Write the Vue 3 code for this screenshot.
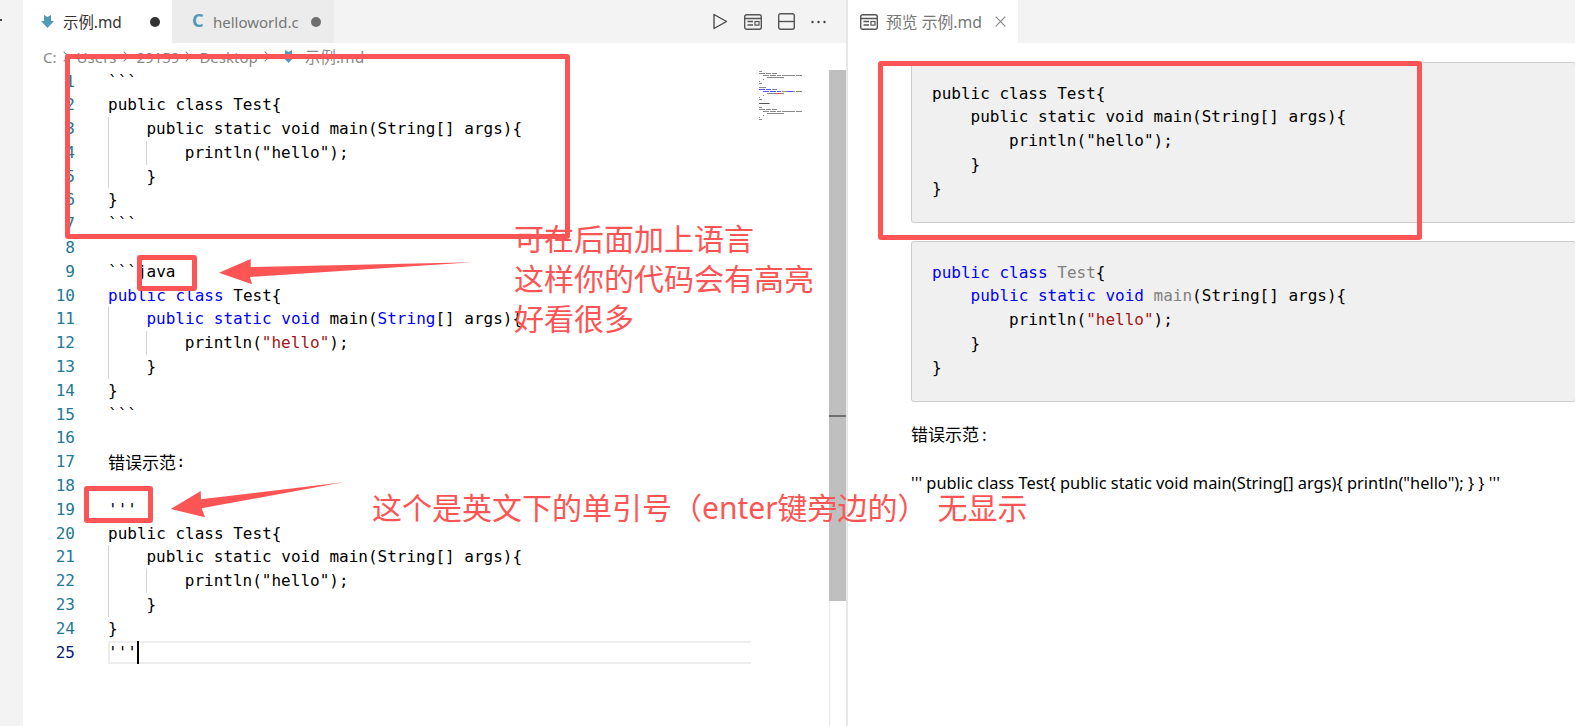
<script setup>
const t = (s, c = '') => ({ s, c })
const K = 'kw', S = 'str'
const plain = [
  { g: 0, x: [t('```')] },
  { g: 0, x: [t('public class Test{')] },
  { g: 1, x: [t('public static void main(String[] args){')] },
  { g: 2, x: [t('println("hello");')] },
  { g: 1, x: [t('}')] },
  { g: 0, x: [t('}')] },
]
const java = [
  { g: 0, x: [t('public', K), t(' '), t('class', K), t(' Test{')] },
  { g: 1, x: [t('public', K), t(' '), t('static', K), t(' '), t('void', K), t(' main('), t('String', K), t('[] args){')] },
  { g: 2, x: [t('println('), t('"hello"', S), t(');')] },
  { g: 1, x: [t('}')] },
  { g: 0, x: [t('}')] },
]
const lines = [
  ...plain,
  { g: 0, x: [t('```')] },
  { g: 0, x: [] },
  { g: 0, x: [t('```java')] },
  ...java,
  { g: 0, x: [t('```')] },
  { g: 0, x: [] },
  { g: 0, cjk: true, x: [t('错误示范', 'cjk'), t(':')] },
  { g: 0, x: [] },
  { g: 0, x: [t("'''")] },
  ...plain.slice(1),
  { g: 0, active: true, x: [t("'''")] },
]
const mini = []
lines.forEach((l, i) => {
  let at = l.g * 4
  l.x.forEach((tok) => {
    if (tok.c === 'cjk') {
      mini.push({ k: `${i}-${at}`, x: at, y: i * 2 + 1, w: 10, f: '#555' })
      at += 10
      return
    }
    tok.s.split(/( )/).forEach((word) => {
      if (word.trim()) {
        mini.push({ k: `${i}-${at}`, x: at, y: i * 2 + 1, w: word.length, f: tok.c === K ? '#5555ff' : tok.c === S ? '#d86060' : '#8a8a8a' })
      }
      at += word.length
    })
  })
})
const preview = [
  [t('public class Test{')],
  [t('    public static void main(String[] args){')],
  [t('        println("hello");')],
  [t('    }')],
  [t('}')],
]
const previewHl = [
  [t('public', K), t(' '), t('class', K), t(' '), t('Test', 'name'), t('{')],
  [t('    '), t('public', K), t(' '), t('static', K), t(' '), t('void', K), t(' '), t('main', 'name'), t('(String[] args){')],
  [t('        println('), t('"hello"', S), t(');')],
  [t('    }')],
  [t('}')],
]
const crumbs = ['C:', 'Users', '29159', 'Desktop']
</script>

<template>
  <div class="app">
    <aside class="activity"><i class="activity-dot"></i></aside>

    <section class="group">
      <header class="tabbar">
        <div class="tab tab-active">
          <svg class="md" viewBox="0 0 13 13"><path d="M3 0 6.5 2 10 0V6H13L6.5 13 0 6H3Z" fill="#519aba" /></svg>
          <span class="tab-name dark">示例.md</span>
          <i class="dot dark-dot"></i>
        </div>
        <div class="tab tab-idle">
          <b class="c-icon">C</b>
          <span class="tab-name">helloworld.c</span>
          <i class="dot"></i>
        </div>
        <div class="actions">
          <svg width="16" height="17" viewBox="0 0 16 17"><path d="M2 1.5 14.5 8.5 2 15.5Z" fill="none" stroke="#424242" stroke-width="1.3" stroke-linejoin="round" /></svg>
          <svg width="18" height="16" viewBox="0 0 18 16"><rect x=".7" y=".7" width="16.6" height="14.6" rx="2" fill="none" stroke="#555" stroke-width="1.4" /><path d="M1 4.5H17M3.5 7.5H9M3.5 11H9" stroke="#555" stroke-width="1.3" fill="none" /><rect x="11" y="7.5" width="4" height="3.6" fill="none" stroke="#555" stroke-width="1.2" /></svg>
          <svg width="17" height="17" viewBox="0 0 17 17"><rect x=".7" y=".7" width="15.6" height="15.6" rx="2" fill="none" stroke="#555" stroke-width="1.4" /><path d="M1 8.5H16" stroke="#555" stroke-width="1.4" /></svg>
          <svg width="15" height="4" viewBox="0 0 15 4"><circle cx="1.5" cy="2" r="1.2" fill="#424242" /><circle cx="7.5" cy="2" r="1.2" fill="#424242" /><circle cx="13.5" cy="2" r="1.2" fill="#424242" /></svg>
        </div>
      </header>

      <nav class="crumbs">
        <template v-for="c in crumbs" :key="c">
          <span>{{ c }}</span>
          <svg class="chev" width="6" height="11" viewBox="0 0 6 11"><path d="M.7.7 5.3 5.5.7 10.3" fill="none" stroke="#888" stroke-width="1.1" /></svg>
        </template>
        <svg class="md md-small" viewBox="0 0 13 13"><path d="M3 0 6.5 2 10 0V6H13L6.5 13 0 6H3Z" fill="#519aba" /></svg>
        <span class="crumb-file">示例.md</span>
      </nav>

      <div class="editor">
        <div class="gutter">
          <div v-for="(l, i) in lines" :key="i" class="num" :class="{ 'num-active': l.active }">{{ i + 1 }}</div>
        </div>
        <div class="code">
          <div v-for="(l, i) in lines" :key="i" class="line" :class="{ 'line-active': l.active }">
            <span v-for="n in l.g" :key="n" class="guide"></span>
            <span v-for="(tok, j) in l.x" :key="j" :class="tok.c">{{ tok.s }}</span>
            <i v-if="l.active" class="cursor"></i>
          </div>
        </div>
        <svg class="minimap" width="48" height="54" viewBox="0 0 48 54">
          <rect v-for="m in mini" :key="m.k" :x="m.x" :y="m.y" :width="m.w" height="1" :fill="m.f" />
        </svg>
        <div class="scroll">
          <div class="thumb"><i class="ruler"></i></div>
        </div>
      </div>
    </section>

    <div class="divider"></div>

    <section class="preview">
      <header class="tabbar">
        <div class="tab tab-preview">
          <svg width="18" height="16" viewBox="0 0 18 16"><rect x=".7" y=".7" width="16.6" height="14.6" rx="2" fill="none" stroke="#555" stroke-width="1.4" /><path d="M1 4.5H17M3.5 7.5H9M3.5 11H9" stroke="#555" stroke-width="1.3" fill="none" /><rect x="11" y="7.5" width="4" height="3.6" fill="none" stroke="#555" stroke-width="1.2" /></svg>
          <span class="tab-name">预览 示例.md</span>
          <svg class="close" width="11" height="11" viewBox="0 0 11 11"><path d="M.7.7 10.3 10.3M10.3.7.7 10.3" stroke="#8a8a8a" stroke-width="1.2" /></svg>
        </div>
      </header>
      <div class="doc">
        <pre class="block"><template v-for="(row, i) in preview" :key="i"><span v-for="(tok, j) in row" :key="j">{{ tok.s }}</span>{{ '\n' }}</template></pre>
        <pre class="block"><template v-for="(row, i) in previewHl" :key="i"><span v-for="(tok, j) in row" :key="j" :class="tok.c">{{ tok.s }}</span>{{ '\n' }}</template></pre>
        <p class="para para-cjk">错误示范<span class="colon">:</span></p>
        <p class="para">''' public class Test{ public static void main(String[] args){ println("hello"); } } '''</p>
      </div>
    </section>

    <i class="mark mark-a"></i>
    <i class="mark mark-b"></i>
    <i class="mark mark-c"></i>
    <i class="mark mark-d"></i>
    <svg class="arrows" width="1575" height="726" viewBox="0 0 1575 726">
      <path d="M472.7 262.3 250.7 267 250.7 259 219 272.7 252 284.3 250 277Z" fill="#fd5555" />
      <path d="M343.3 482.3 201 499.3 200.7 491 170.7 509 205 517.3 201.7 508.3Z" fill="#fd5555" />
    </svg>
    <div class="note note-a">可在后面加上语言<br />这样你的代码会有高亮<br />好看很多</div>
    <div class="note note-b">这个是英文下的单引号（enter键旁边的） 无显示</div>
  </div>
</template>

<style>
html, body { margin: 0; background: #fff; overflow: hidden; }
</style>

<style scoped>
.app {
  position: relative;
  display: flex;
  width: 1575px;
  height: 726px;
  overflow: hidden;
  background: #fff;
  font-family: "Noto Sans", "Noto Sans CJK SC", sans-serif;
}
.activity { position: relative; width: 23px; flex: none; background: #f3f3f3; }
.activity-dot { position: absolute; left: 0; top: 19px; width: 2px; height: 2px; background: #444; }
.group { width: 823px; flex: none; display: flex; flex-direction: column; }
.tabbar { height: 43px; flex: none; display: flex; align-items: stretch; background: #f3f3f3; }
.tab { display: flex; align-items: center; }
.tab-active { width: 149px; background: #fff; padding-left: 18px; box-sizing: border-box; }
.tab-idle { width: 162px; background: #ececec; padding-left: 20px; box-sizing: border-box; }
.tab-preview { width: 170px; background: #fff; padding-left: 12px; box-sizing: border-box; }
.tab-name { font-size: 15px; color: #777; white-space: nowrap; }
.tab-active .tab-name { margin-left: 9px; width: 87px; font-size: 15.4px; }
.tab-idle .tab-name { margin-left: 11px; width: 98px; }
.tab-preview .tab-name { margin-left: 8px; width: 109px; font-size: 15.8px; }
.dark { color: #333; }
.md { width: 13px; height: 13px; flex: none; }
.c-icon { width: 10px; color: #519aba; font-size: 18px; line-height: 18px; font-weight: 700; font-family: "Noto Sans", sans-serif; margin-top: -3px; }
.dot { width: 10px; height: 10px; border-radius: 50%; background: #6f6f6f; flex: none; }
.dark-dot { background: #333; }
.actions { margin-left: auto; display: flex; align-items: center; gap: 16px; padding-right: 20px; }
.crumbs { height: 27px; flex: none; display: flex; align-items: center; padding-left: 20px; font-size: 15px; color: #888; box-sizing: border-box; }
.chev { margin: 0 8px 0 6px; flex: none; }
.md-small { margin: 0 10px 0 4px; }
.crumb-file { font-size: 15.6px; }
.editor { flex: 1; display: flex; min-height: 0; }
.gutter { width: 52px; flex: none; margin-top: -0.5px; }
.num, .line { height: 23.8px; line-height: 23.8px; font-family: "DejaVu Sans Mono", monospace; font-size: 16px; white-space: pre; }
.num { text-align: right; color: #237893; }
.num-active { color: #0b216f; }
.code { width: 643px; margin-left: 33px; flex: none; margin-top: -0.5px; color: #000; }
.line { position: relative; display: flex; box-sizing: border-box; }
.line-active { box-shadow: inset 2px 0 0 #eee, inset 0 2px 0 #eee, inset 0 -2px 0 #eee; }
.guide { width: 38.4px; flex: none; border-left: 1px solid #d3d3d3; box-sizing: border-box; }
.kw { color: #0000ff; }
.str { color: #a31515; }
.name { color: #808080; }
.cjk { font-family: "Noto Sans CJK SC", sans-serif; font-size: 17px; }
.cursor { position: absolute; left: 28.5px; top: 0; width: 2px; height: 100%; background: #000; }
.minimap { margin-left: 8px; flex: none; align-self: flex-start; }
.scroll { width: 17px; flex: none; margin-left: 22px; border-left: 1px solid #e8e8e8; box-sizing: border-box; }
.thumb { position: relative; height: 531px; margin-left: -1px; background: #bfbfbf; }
.ruler { position: absolute; left: 0; right: 0; top: 345px; height: 2px; background: #707070; }
.divider { width: 2px; flex: none; background: #e7e7e7; }
.preview { flex: 1; min-width: 0; display: flex; flex-direction: column; }
.doc { padding: 18.7px 0 0 63px; }
.block {
  margin: 0 -1px 18px 0;
  height: 161px;
  padding: 19px 0 0 20px;
  box-sizing: border-box;
  background: #f0f0f0;
  border: 1px solid #ccc;
  border-radius: 3px;
  font-family: "DejaVu Sans Mono", monospace;
  font-size: 16px;
  line-height: 23.8px;
  color: #000;
}
.para { margin: 0; font-size: 16.4px; line-height: 24px; color: #000; white-space: nowrap; }
.para-cjk { margin: 20px 0 25px; font-family: "Noto Sans CJK SC", sans-serif; font-size: 17px; }
.colon { margin-left: 3px; }
.mark { position: absolute; box-sizing: border-box; border: 5px solid #fd5555; border-radius: 3px; }
.mark-a { left: 65px; top: 54px; width: 505px; height: 185px; }
.mark-b { left: 878px; top: 61px; width: 544px; height: 179px; }
.mark-c { left: 137px; top: 255px; width: 60px; height: 36px; }
.mark-d { left: 84px; top: 486px; width: 69px; height: 37px; }
.arrows { position: absolute; left: 0; top: 0; pointer-events: none; }
.note { position: absolute; font-family: "Noto Sans", "Noto Sans CJK SC", sans-serif; font-size: 30px; line-height: 40px; color: #fd5555; white-space: nowrap; }
.note-a { left: 514px; top: 219px; }
.note-b { left: 372px; top: 488px; word-spacing: 2px; }
</style>
